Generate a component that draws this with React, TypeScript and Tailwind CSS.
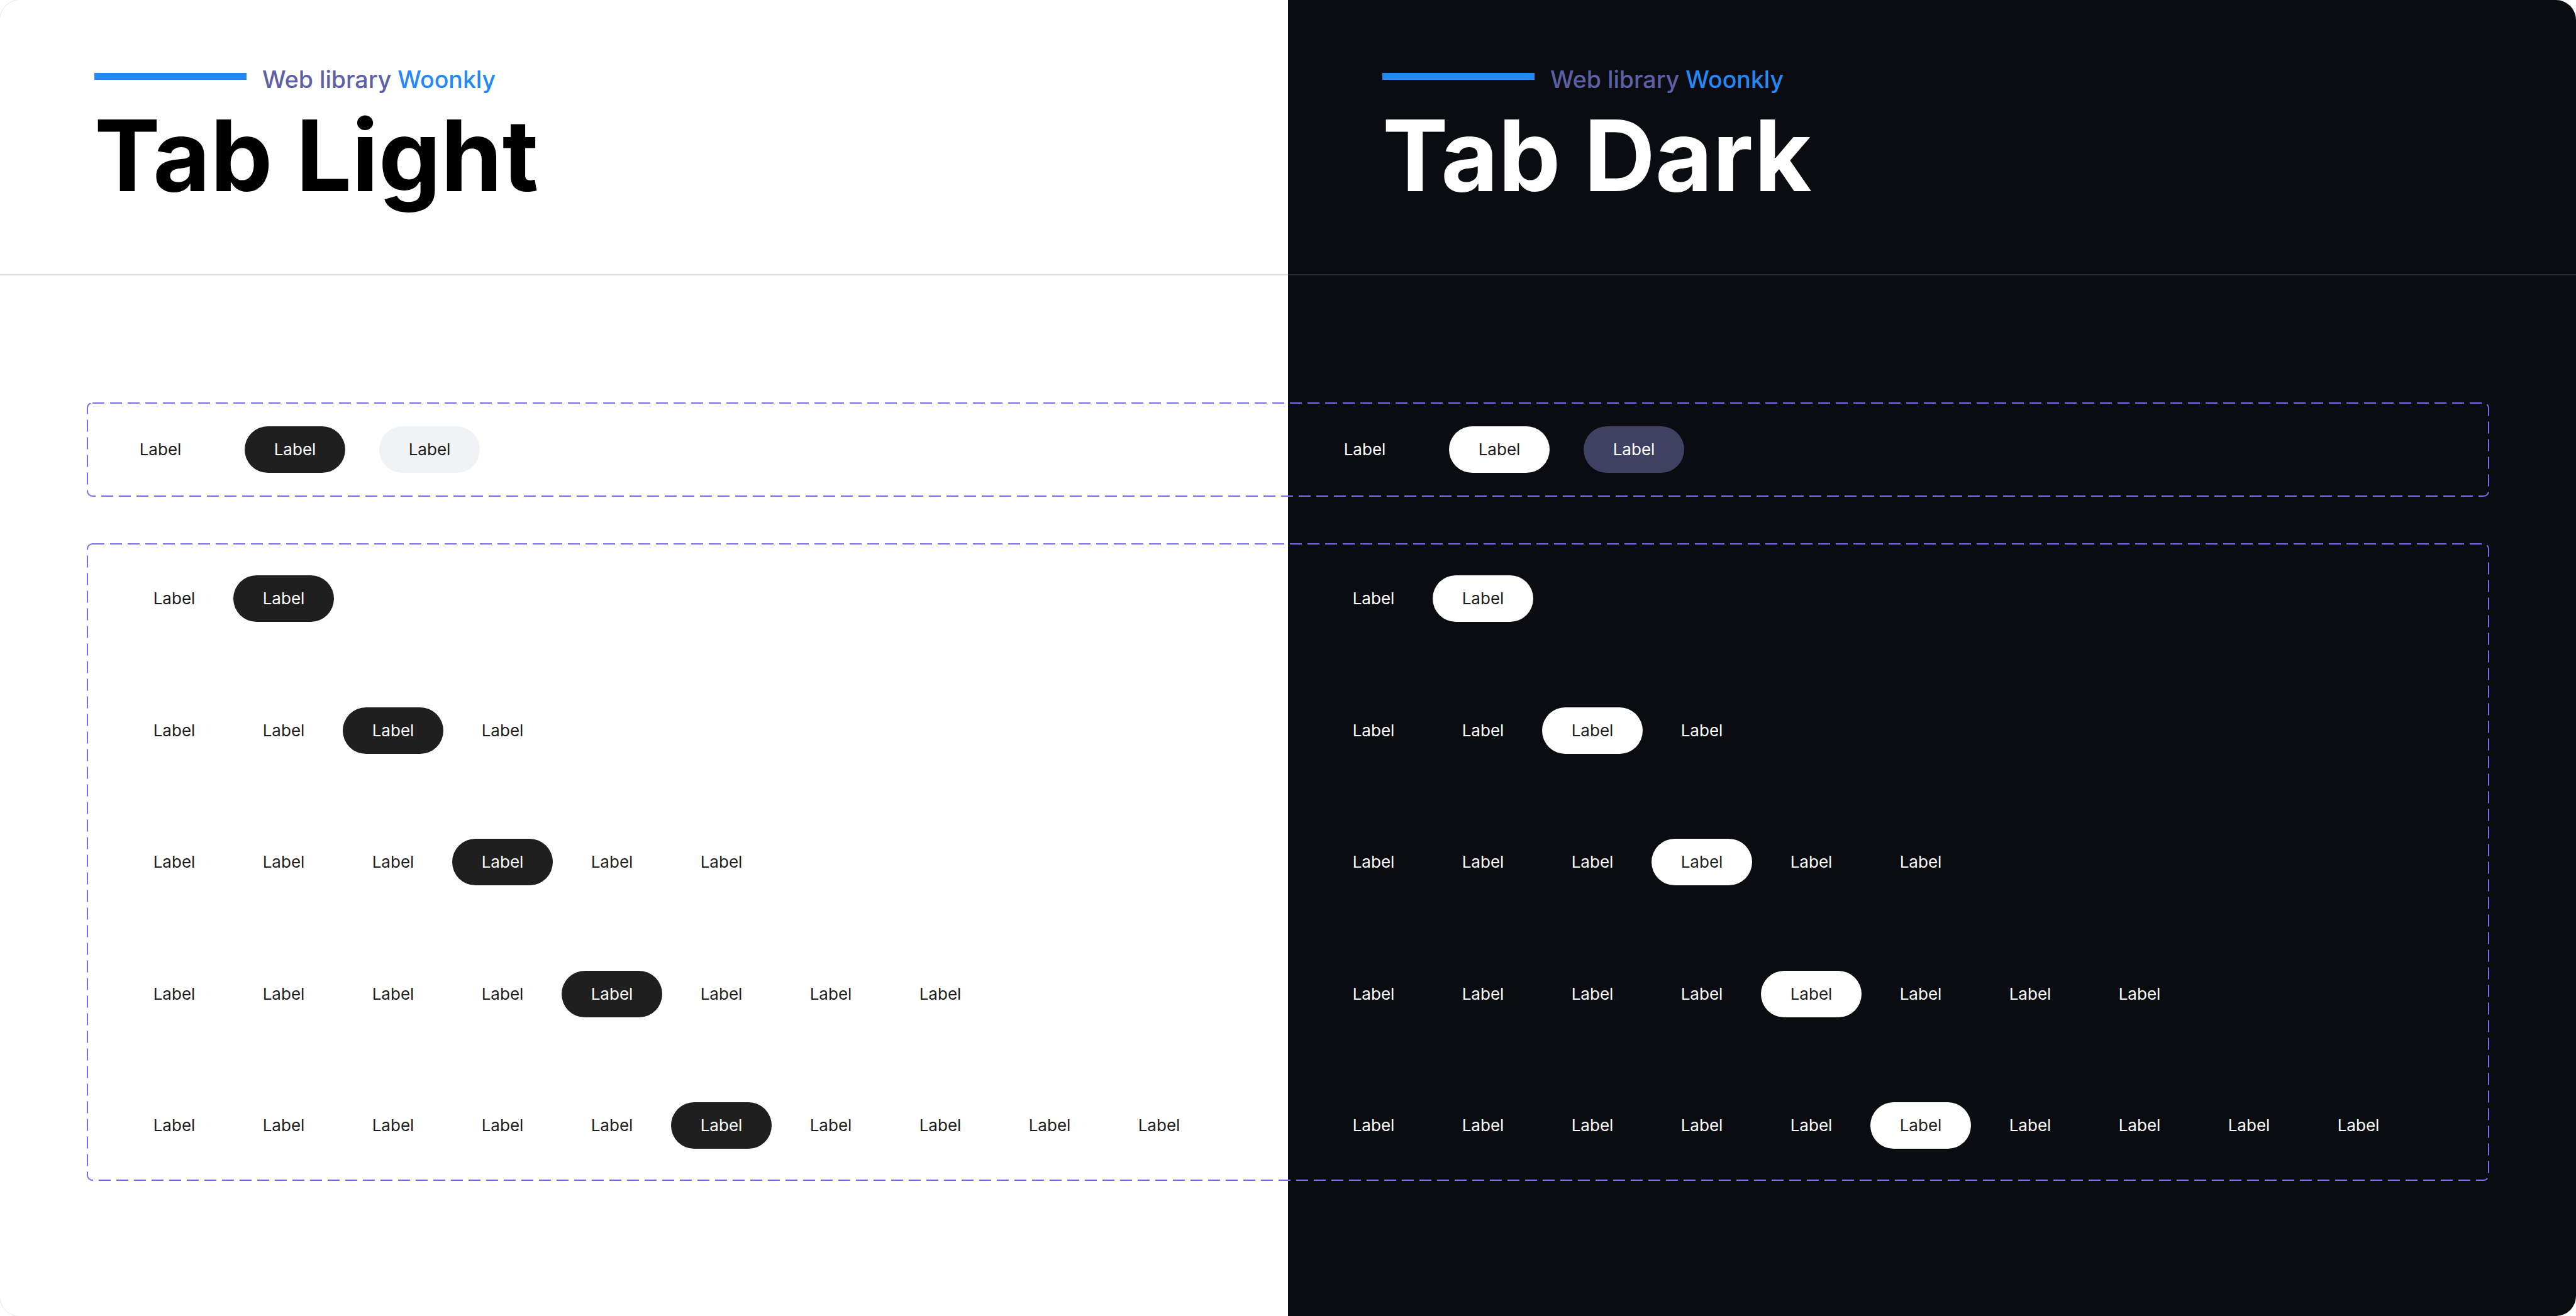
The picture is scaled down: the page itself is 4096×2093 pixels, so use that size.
import React from 'react';

type Theme = 'light' | 'dark';

const DashedFrame: React.FC = () => (
  <svg className="pointer-events-none absolute inset-0 h-full w-full" aria-hidden>
    <rect
      x="1"
      y="1"
      rx="8"
      ry="8"
      fill="none"
      stroke="#7a6cf2"
      strokeWidth="2"
      strokeDasharray="19 9"
      style={{ width: 'calc(100% - 2px)', height: 'calc(100% - 2px)' }}
    />
  </svg>
);

const Tab: React.FC<{ theme: Theme; state?: 'idle' | 'active' | 'hover' }> = ({ theme, state = 'idle' }) => {
  let cls = theme === 'light' ? 'text-[#1c1c1c]' : 'text-white';
  if (state === 'active') cls = theme === 'light' ? 'bg-[#1f1f1f] text-white' : 'bg-white text-[#1c1c1c]';
  if (state === 'hover') cls = theme === 'light' ? 'bg-[#f1f2f6] text-[#1c1c1c]' : 'bg-[#3f4163] text-white';
  return (
    <div className={`flex h-[74px] w-[160px] shrink-0 items-center justify-center rounded-full text-[26px] leading-none ${cls}`}>
      Label
    </div>
  );
};

const Header: React.FC<{ theme: Theme; title: string }> = ({ theme, title }) => (
  <div
    className={`flex h-[438px] flex-col gap-[23px] border-b-2 pl-[150px] pt-[108px] ${
      theme === 'light' ? 'border-[#dadada]' : 'border-[#282b37]'
    }`}
  >
    <div className="flex items-start gap-[25px]">
      <div className="mt-[8px] h-[11px] w-[242px] bg-[#2588f7]" />
      <span className="text-[37.5px] font-medium leading-none text-[#5d60a3]">
        Web library <span className="text-[#2588f7]">Woonkly</span>
      </span>
    </div>
    <h1 className={`text-[157px] font-bold leading-none ${theme === 'light' ? 'text-black' : 'text-white'}`}>
      {title}
    </h1>
  </div>
);

const rows = [
  { count: 2, active: 1 },
  { count: 4, active: 2 },
  { count: 6, active: 3 },
  { count: 8, active: 4 },
  { count: 10, active: 5 },
];

const TabRows: React.FC<{ theme: Theme }> = ({ theme }) => (
  <div className={`flex flex-col gap-[135.5px] py-[51px] ${theme === 'light' ? 'pl-[59px]' : 'pl-[56px]'}`}>
    {rows.map((r, i) => (
      <div key={i} className="flex gap-[14px]">
        {Array.from({ length: r.count }).map((_, j) => (
          <Tab key={j} theme={theme} state={j === r.active ? 'active' : 'idle'} />
        ))}
      </div>
    ))}
  </div>
);

export default function App() {
  return (
    <div className="h-[2093px] w-[4096px] bg-white font-['Inter','Liberation_Sans',sans-serif]">
      <div className="h-full w-full overflow-hidden rounded-[32px] bg-[linear-gradient(to_right,#ffffff_50%,#0b0c11_50%)] ring-1 ring-[#e6e6e6]">
        <div className="grid grid-cols-2">
          <Header theme="light" title="Tab Light" />
          <Header theme="dark" title="Tab Dark" />
        </div>

        <div className="px-[138px] pt-[202px]">
          {/* states row */}
          <div className="relative grid h-[150px] grid-cols-2 items-center">
            <DashedFrame />
            <div className="flex gap-[54px] pl-[37px]">
              <Tab theme="light" />
              <Tab theme="light" state="active" />
              <Tab theme="light" state="hover" />
            </div>
            <div className="flex gap-[54px] pl-[42px]">
              <Tab theme="dark" />
              <Tab theme="dark" state="active" />
              <Tab theme="dark" state="hover" />
            </div>
          </div>

          {/* tab groups */}
          <div className="relative mt-[74px] grid h-[1014px] grid-cols-2">
            <DashedFrame />
            <TabRows theme="light" />
            <TabRows theme="dark" />
          </div>
        </div>
      </div>
    </div>
  );
}
